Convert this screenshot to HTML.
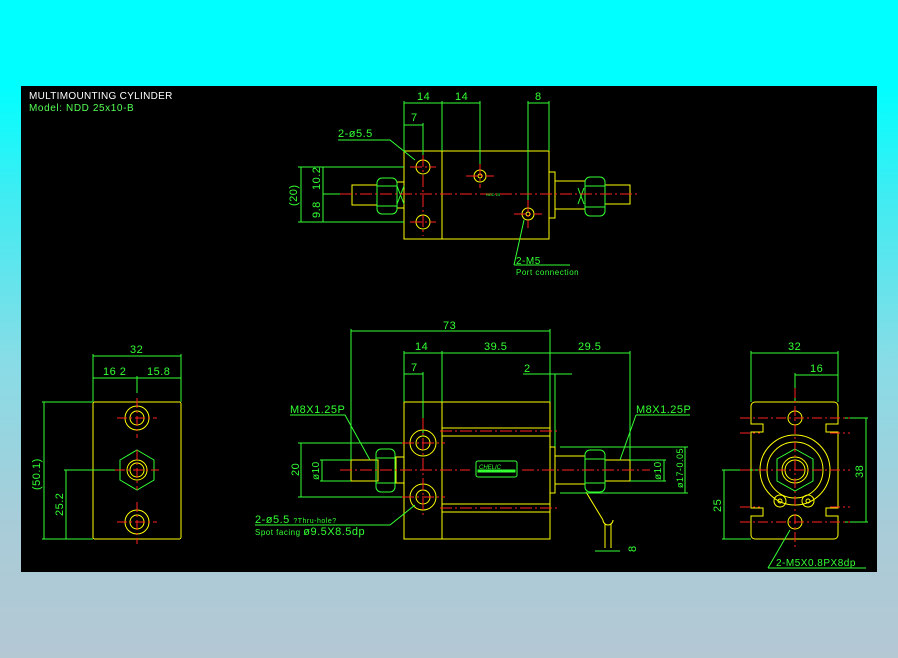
<!DOCTYPE html>
<html><head><meta charset="utf-8"><style>
html,body{margin:0;padding:0;width:898px;height:658px;overflow:hidden;background:linear-gradient(#00ffff 0%,#00ffff 13%,#40ecf2 30%,#88dce6 55%,#a8ccd8 80%,#b4c8d4 100%);}
svg{position:absolute;left:0;top:0}
text{font-family:"Liberation Sans",sans-serif;}
.c{shape-rendering:crispEdges}
</style></head><body>
<svg width="898" height="658" viewBox="0 0 898 658">
<rect x="21" y="86" width="856" height="486" fill="#000"/>
<text x="29" y="99" fill="#fff" font-size="10" letter-spacing="0.3">MULTIMOUNTING CYLINDER</text>
<text x="29" y="111" fill="#5f5" font-size="10" letter-spacing="0.6">Model: NDD 25x10-B</text>

<g fill="none" stroke-width="1">
<!-- TOP VIEW -->
<g stroke="#ff0" class="c">
<rect x="404" y="151" width="38" height="88"/>
<rect x="442" y="151" width="107" height="88"/>
<rect x="549" y="172" width="6" height="46"/>
<rect x="555" y="181" width="30" height="28"/>
<rect x="605" y="185" width="25" height="19"/>
<rect x="352" y="185" width="25" height="20"/>
<rect x="397" y="182" width="7" height="26"/>
</g>
<g stroke="#ff0">
<circle cx="423" cy="167" r="7"/><circle cx="423" cy="222" r="7"/>
<circle cx="480" cy="176" r="6"/><circle cx="480" cy="176" r="2"/>
<circle cx="528" cy="214" r="6"/><circle cx="528" cy="214" r="2"/>
</g>
<g stroke="#3f3">
<rect x="377" y="178" width="20" height="36" rx="5"/>
<rect x="585" y="177" width="20" height="39" rx="5"/>
<path d="M377 186 H397 M377 206 H397 M585 186 H605 M585 207 H605"/>
<path d="M397 186 L404 204 M397 204 L404 186 M578 188 L584 204 M578 204 L584 188"/>
<path class="c" d="M404 101 V151 M442 101 V151 M480 101 V170 M404 103 H480 M404 125 H423 M423 123 V160 M528 101 V208 M549 101 V151 M528 103 H549"/>
<path d="M338 140 H390 L415 160"/>
<path class="c" d="M298 167 H404 M298 222 H404 M323 194 H352 M301 167 V222 M323 167 V222"/>
<path d="M514 265 L524 220 M514 265 H570"/>
</g>
<path stroke="#f22" class="c" stroke-dasharray="12 3 2 3" d="M340 194 H640 M410 167 H436 M423 155 V236 M410 222 H436 M466 176 H494 M480 164 V188 M514 214 H542 M528 200 V228"/>

<!-- FRONT VIEW -->
<g stroke="#ff0" class="c">
<rect x="404" y="402" width="146" height="137"/>
<path d="M442 402 V539 M442 428 H550 M442 436 H550 M442 504 H550 M442 512 H550"/>
<rect x="550" y="447" width="5" height="46"/>
<rect x="555" y="456" width="30" height="28"/>
<rect x="605" y="460" width="25" height="21"/>
<rect x="351" y="460" width="27" height="21"/>
<rect x="396" y="457" width="8" height="26"/>
</g>
<g stroke="#ff0">
<circle cx="423" cy="443" r="13"/><circle cx="423" cy="443" r="7"/>
<circle cx="423" cy="497" r="13"/><circle cx="423" cy="497" r="7"/>
<path d="M586 492 L603 520 M603 520 a5 5 0 1 0 10 0 M605 524 V548 M611 524 V548"/>
</g>
<g stroke="#3f3">
<rect x="376" y="449" width="19" height="43" rx="5"/>
<rect x="585" y="450" width="20" height="42" rx="5"/>
<path d="M376 458 H395 M376 483 H395 M585 459 H605 M585 483 H605"/>
<rect x="476" y="461" width="41" height="16" rx="2"/>
<rect x="478" y="470" width="37" height="2" fill="#3f3"/>
<path class="c" d="M351 329 V460 M550 329 V402 M351 331 H550 M404 351 V402 M442 351 V402 M630 351 V460 M404 353 H630 M404 374 H423 M423 372 V436 M523 374 H572 M555 374 V447"/>
<path d="M290 415 H345 L370 460 M636 415 H690 M636 415 L620 460"/>
<path class="c" d="M298 443 H404 M298 497 H404 M301 443 V497 M320 460 H351 M320 481 H351 M322 460 V481 M630 460 H666 M630 481 H666 M664 460 V481 M560 447 H688 M560 493 H688 M685 447 V493"/>
<path d="M255 525 H390 L415 505"/>
<path class="c" d="M595 551 H620"/>
</g>
<path stroke="#f22" class="c" stroke-dasharray="12 3 2 3" d="M340 470 H470 M522 470 H650 M402 443 H445 M423 418 V518 M402 497 H445 M440 431 H560 M440 508 H560"/>

<!-- LEFT SIDE VIEW -->
<g stroke="#ff0">
<rect x="93" y="402" width="88" height="137" rx="2" class="c"/>
<circle cx="137" cy="418" r="12"/><circle cx="137" cy="418" r="7"/>
<circle cx="137" cy="470" r="10"/><circle cx="137" cy="470" r="7"/>
<circle cx="137" cy="522" r="12"/><circle cx="137" cy="522" r="7"/>
</g>
<g stroke="#3f3">
<polygon points="137,450 154,460 154,480 137,490 120,480 120,460"/>
<path class="c" d="M93 354 V402 M181 354 V402 M93 356 H181 M93 378 H181 M137 376 V393 M42 402 H93 M42 539 H93 M44 402 V539 M64 470 H120 M66 470 V539"/>
</g>
<path stroke="#f22" class="c" stroke-dasharray="10 3 2 3" d="M117 418 H157 M137 398 V438 M115 470 H159 M137 450 V490 M117 522 H157 M137 502 V544"/>

<!-- RIGHT SIDE VIEW -->
<g stroke="#ff0">
<path d="M755 402 H834 a4 4 0 0 1 4 4 V424 H826 V432 H838 V508 H826 V516 H838 V535 a4 4 0 0 1 -4 4 H755 a4 4 0 0 1 -4 -4 V516 H763 V508 H751 V432 H763 V424 H751 V406 a4 4 0 0 1 4 -4 Z"/>
<circle cx="795" cy="470" r="35"/><circle cx="795" cy="470" r="28"/>
<circle cx="795" cy="470" r="13"/><circle cx="795" cy="470" r="10"/>
<circle cx="795" cy="418" r="7"/><circle cx="795" cy="522" r="7"/>
<circle cx="780" cy="501" r="6"/><circle cx="780" cy="501" r="2"/>
<circle cx="808" cy="501" r="6"/><circle cx="808" cy="501" r="2"/>
</g>
<g stroke="#3f3">
<polygon points="795,449 813,459 813,481 795,491 777,481 777,459"/>
<path class="c" d="M751 351 V402 M838 351 V402 M751 353 H838 M795 373 V402 M795 375 H838 M845 418 H868 M845 522 H868 M866 418 V522 M722 470 H760 M722 539 H751 M724 470 V539 M768 568 H866"/>
<path d="M768 568 L790 530"/>
</g>
<path stroke="#f22" class="c" stroke-dasharray="10 3 2 3" d="M740 418 H850 M740 522 H850 M740 470 H850 M740 433 H760 M830 433 H850 M740 507 H760 M830 507 H850 M795 388 V548"/>
</g>

<g fill="#3f3" font-size="11" letter-spacing="0.5">
<text x="417" y="100">14</text><text x="455" y="100">14</text><text x="535" y="100">8</text>
<text x="411" y="121">7</text>
<text x="338" y="137">2-ø5.5</text>
<text x="516" y="264" font-size="10">2-M5</text>
<text x="516" y="275" font-size="8">Port connection</text>
<text transform="translate(297,206) rotate(-90)">(20)</text>
<text transform="translate(320,190) rotate(-90)">10.2</text>
<text transform="translate(320,218) rotate(-90)">9.8</text>
<text x="443" y="329">73</text>
<text x="415" y="350">14</text><text x="484" y="350">39.5</text><text x="578" y="350">29.5</text>
<text x="411" y="371">7</text><text x="524" y="372">2</text>
<text x="290" y="413">M8X1.25P</text><text x="636" y="413">M8X1.25P</text>
<text transform="translate(299,476) rotate(-90)">20</text>
<text transform="translate(319,480) rotate(-90)" font-size="10">ø10</text>
<text transform="translate(661,480) rotate(-90)" font-size="10">ø10</text>
<text transform="translate(683,488) rotate(-90)" font-size="9">ø17-0.05</text>
<text x="255" y="523">2-ø5.5 <tspan font-size="7">?Thru-hole?</tspan></text>
<text x="255" y="535" font-size="8">Spot facing <tspan font-size="11">ø9.5X8.5dp</tspan></text>
<text transform="translate(636,552) rotate(-90)">8</text>
<text x="130" y="353">32</text>
<text x="103" y="375">16 2</text><text x="147" y="375">15.8</text>
<text transform="translate(40,490) rotate(-90)">(50.1)</text>
<text transform="translate(63,516) rotate(-90)">25.2</text>
<text x="788" y="350">32</text><text x="810" y="372">16</text>
<text transform="translate(863,478) rotate(-90)">38</text>
<text transform="translate(721,512) rotate(-90)">25</text>
<text x="776" y="566" font-size="10">2-M5X0.8PX8dp</text>
</g>
<text x="479" y="469" fill="#3f3" font-size="6" font-style="italic">CHELIC</text>
<text x="480" y="476" fill="#000" font-size="4">NDD 25x10</text>
<text x="486" y="196" fill="#3f3" font-size="4">NDD 25</text>
</svg>
</body></html>
